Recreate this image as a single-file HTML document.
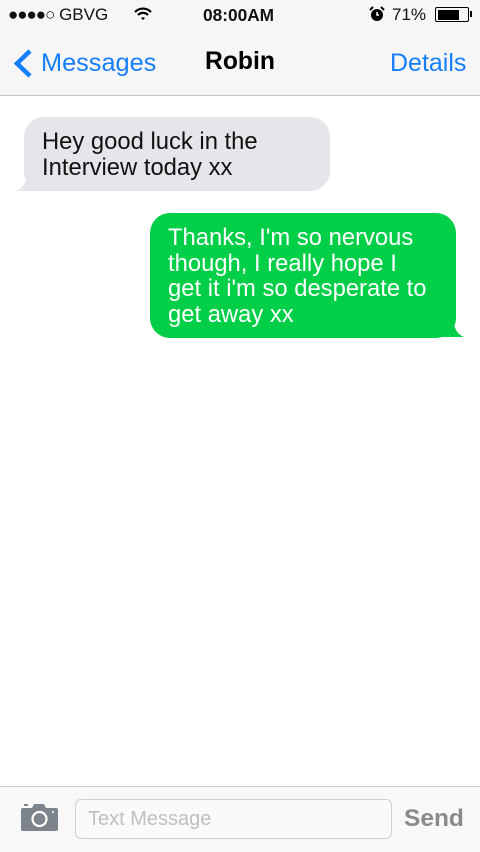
<!DOCTYPE html>
<html><head><style>
*{margin:0;padding:0;box-sizing:border-box}
body{width:480px;height:852px;background:#fff;font-family:"Liberation Sans",Arial,Helvetica,sans-serif;position:relative;overflow:hidden}
.top{position:absolute;left:0;top:0;width:480px;height:96px;background:#f6f6f6;border-bottom:1px solid #c8c8cc}
.abs{position:absolute;white-space:nowrap}
.blue{color:#157efb}
.bub{position:absolute;font-size:23.8px;line-height:25.7px;border-radius:20px;white-space:nowrap}
.bottom{position:absolute;left:0;top:786px;width:480px;height:66px;background:#f8f8f8;border-top:1px solid #c4c8d0}
</style></head><body>
<div class="top">
 <div class="abs" style="left:8px;top:5px;font-size:17px;color:#111">
  <span style="letter-spacing:-1px">●●●●○</span> GBVG
 </div>
 <svg class="abs" style="left:134px;top:7px" width="18" height="14" viewBox="0 0 18 14"><path d="M1 5 A11 11 0 0 1 17 5" stroke="#000" stroke-width="2.2" fill="none"/><path d="M4 8 A7 7 0 0 1 14 8" stroke="#000" stroke-width="2.2" fill="none"/><path d="M7 11 L9 13 L11 11 A3 3 0 0 0 7 11Z" fill="#000"/></svg>
 <div class="abs" style="left:203px;top:5px;font-size:17.3px;font-weight:bold;color:#111">08:00AM</div>
 <svg class="abs" style="left:369px;top:6px" width="16" height="16" viewBox="0 0 16 16"><circle cx="8" cy="9" r="6" fill="#000"/><path d="M8 6v3h2" stroke="#fff" stroke-width="1.5" fill="none"/><path d="M1 4 L4 1 M15 4 L12 1" stroke="#000" stroke-width="2"/></svg>
 <div class="abs" style="left:392px;top:5px;font-size:17px;color:#111">71%</div>
 <div class="abs" style="left:435px;top:7px;width:34px;height:15px;border:1.5px solid #000;border-radius:2px;padding:1.5px"><div style="width:21px;height:100%;background:#000"></div></div>
 <div class="abs" style="left:470px;top:11px;width:2px;height:6px;background:#000"></div>
 <svg class="abs" style="left:12px;top:48px" width="22" height="31" viewBox="0 0 22 31"><path d="M18 3 L5 15.5 L18 28" stroke="#157efb" stroke-width="4.5" fill="none"/></svg>
 <div class="abs blue" style="left:41px;top:49px;font-size:25.3px">Messages</div>
 <div class="abs" style="left:205px;top:48px;font-size:24.7px;font-weight:bold;color:#000">Robin</div>
 <div class="abs blue" style="left:390px;top:49px;font-size:25px">Details</div>
</div>

<svg class="abs" style="left:14px;top:170px" width="40" height="24" viewBox="0 0 40 24"><path d="M30 0 L30 21 L2 21 Q12 18 14 0Z" fill="#e5e5ea"/></svg>
<div class="bub" style="left:24px;top:117px;width:306px;height:74px;background:#e5e5ea;color:#111;padding:12px 0 0 18px">Hey good luck in the<br>Interview today xx</div>

<svg class="abs" style="left:425px;top:315px" width="42" height="25" viewBox="0 0 42 25"><path d="M10 0 L10 22 L39 22 Q28 18 28 0Z" fill="#00cf47"/></svg>
<div class="bub" style="left:150px;top:213px;width:306px;height:125px;background:#00cf47;color:#fff;padding:12px 0 0 18px">Thanks, I'm so nervous<br>though, I really hope I<br>get it i'm so desperate to<br>get away xx</div>

<div class="bottom">
 <svg class="abs" style="left:20px;top:15px" width="39" height="30" viewBox="0 0 39 30"><path d="M3 6 H12 L14 2 H24 L26 6 H36 Q38 6 38 8 V27 Q38 29 36 29 H3 Q1 29 1 27 V8 Q1 6 3 6Z" fill="#7e848c"/><circle cx="19.5" cy="17" r="7" fill="none" stroke="#fff" stroke-width="2.2"/><rect x="4" y="2" width="4" height="2" fill="#7e848c"/><circle cx="33" cy="10" r="1" fill="#fff"/></svg>
 <div class="abs" style="left:75px;top:12px;width:317px;height:40px;border:1px solid #d0d0d4;border-radius:6px;background:#fafafa"></div>
 <div class="abs" style="left:88px;top:21px;font-size:20px;color:#c0c0c4">Text Message</div>
 <div class="abs" style="left:404px;top:18px;font-size:24.5px;font-weight:bold;color:#8a8a8e">Send</div>
</div>
</body></html>
